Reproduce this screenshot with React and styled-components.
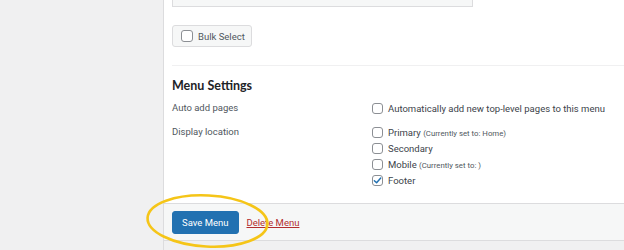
import React from 'react';
import styled, { createGlobalStyle } from 'styled-components';

const GlobalStyle = createGlobalStyle`
  html, body {
    margin: 0;
    padding: 0;
    background: #f0f0f1;
    font-family: Roboto, "Open Sans", sans-serif;
  }
`;

const Page = styled.div`
  position: relative;
  display: flex;
  width: 624px;
  height: 250px;
  overflow: hidden;
`;

const Sidebar = styled.div`
  width: 163px;
  flex-shrink: 0;
  background: #f0f0f1;
  border-right: 1px solid #dcdcde;
`;

const Main = styled.div`
  flex: 1;
  display: flex;
  flex-direction: column;
`;

const Content = styled.div`
  background: #fff;
  height: 203px;
  padding-left: 8px;
`;

const TopBox = styled.div`
  width: 299px;
  height: 6px;
  background: #f6f7f7;
  border: 1px solid #dcdcde;
  border-top: none;
`;

const BulkButton = styled.label`
  display: inline-flex;
  align-items: center;
  gap: 5px;
  margin-top: 18px;
  height: 20px;
  padding: 0 6px 0 8px;
  background: #f6f7f7;
  border: 1px solid #dcdcde;
  border-radius: 3px;
  font-size: 9.5px;
  color: #50575e;
`;

const Box = styled.span`
  display: inline-flex;
  align-items: center;
  justify-content: center;
  width: ${p => p.$size || 11}px;
  height: ${p => p.$size || 11}px;
  box-sizing: border-box;
  flex-shrink: 0;
  background: #fff;
  border: 1px solid #8c8f94;
  border-radius: 3px;
`;

const Divider = styled.div`
  margin-top: 18px;
  height: 1px;
  background: #f0f0f1;
`;

const Heading = styled.h3`
  margin: 12px 0 0;
  font-family: Lato, sans-serif;
  font-size: 12.5px;
  font-weight: 700;
  line-height: 16px;
  color: #1d2327;
`;

const Settings = styled.div`
  display: grid;
  grid-template-columns: 200px 1fr;
  row-gap: 8px;
  margin-top: 6px;
`;

const Label = styled.div`
  font-size: 9.5px;
  line-height: 16px;
  color: #50575e;
`;

const Options = styled.div`
  display: flex;
  flex-direction: column;
`;

const Option = styled.label`
  display: flex;
  align-items: center;
  gap: 5px;
  height: 16px;
  white-space: nowrap;
  font-size: 9.5px;
  color: #3c434a;
`;

const Note = styled.span`
  font-size: 7.8px;
  color: #50575e;
`;

const Footer = styled.div`
  display: flex;
  align-items: center;
  gap: 8px;
  height: 36px;
  padding-left: 8px;
  background: #f6f7f7;
  border-top: 1px solid #dcdcde;
  border-bottom: 1px solid #dcdcde;
`;

const SaveButton = styled.button`
  height: 23px;
  padding: 0 9px;
  border: 1px solid #2271b1;
  border-radius: 3px;
  background: #2271b1;
  color: #fff;
  font-family: inherit;
  font-size: 9.5px;
`;

const DeleteLink = styled.a`
  font-size: 9.5px;
  color: #b32d2e;
  text-decoration: underline;
`;

const Highlight = styled.svg`
  position: absolute;
  left: 140px;
  top: 188px;
  pointer-events: none;
`;

const Check = () => (
  <svg width="9" height="9" viewBox="0 0 10 10">
    <path d="M1.5 5.2 L4 7.6 L8.6 2.2" fill="none" stroke="#2271b1" strokeWidth="1.6" strokeLinecap="round" strokeLinejoin="round" />
  </svg>
);

const locations = [
  { name: 'Primary', note: '(Currently set to: Home)' },
  { name: 'Secondary' },
  { name: 'Mobile', note: '(Currently set to: )' },
  { name: 'Footer', checked: true },
];

export default function App() {
  return (
    <>
      <GlobalStyle />
      <Page>
        <Sidebar />
        <Main>
          <Content>
            <TopBox />
            <BulkButton>
              <Box $size={12} />
              Bulk Select
            </BulkButton>
            <Divider />
            <Heading>Menu Settings</Heading>
            <Settings>
              <Label>Auto add pages</Label>
              <Options>
                <Option>
                  <Box />
                  <span>Automatically add new top-level pages to this menu</span>
                </Option>
              </Options>
              <Label>Display location</Label>
              <Options>
                {locations.map(loc => (
                  <Option key={loc.name}>
                    <Box>{loc.checked && <Check />}</Box>
                    <span>
                      {loc.name}
                      {loc.note && <> <Note>{loc.note}</Note></>}
                    </span>
                  </Option>
                ))}
              </Options>
            </Settings>
          </Content>
          <Footer>
            <SaveButton>Save Menu</SaveButton>
            <DeleteLink>Delete Menu</DeleteLink>
          </Footer>
        </Main>
        <Highlight width="140" height="62" viewBox="0 0 140 62">
          <ellipse cx="67.5" cy="33" rx="60" ry="25.5" fill="none" stroke="#f5c518" strokeWidth="2.6" transform="rotate(3 67.5 33)" />
        </Highlight>
      </Page>
    </>
  );
}
